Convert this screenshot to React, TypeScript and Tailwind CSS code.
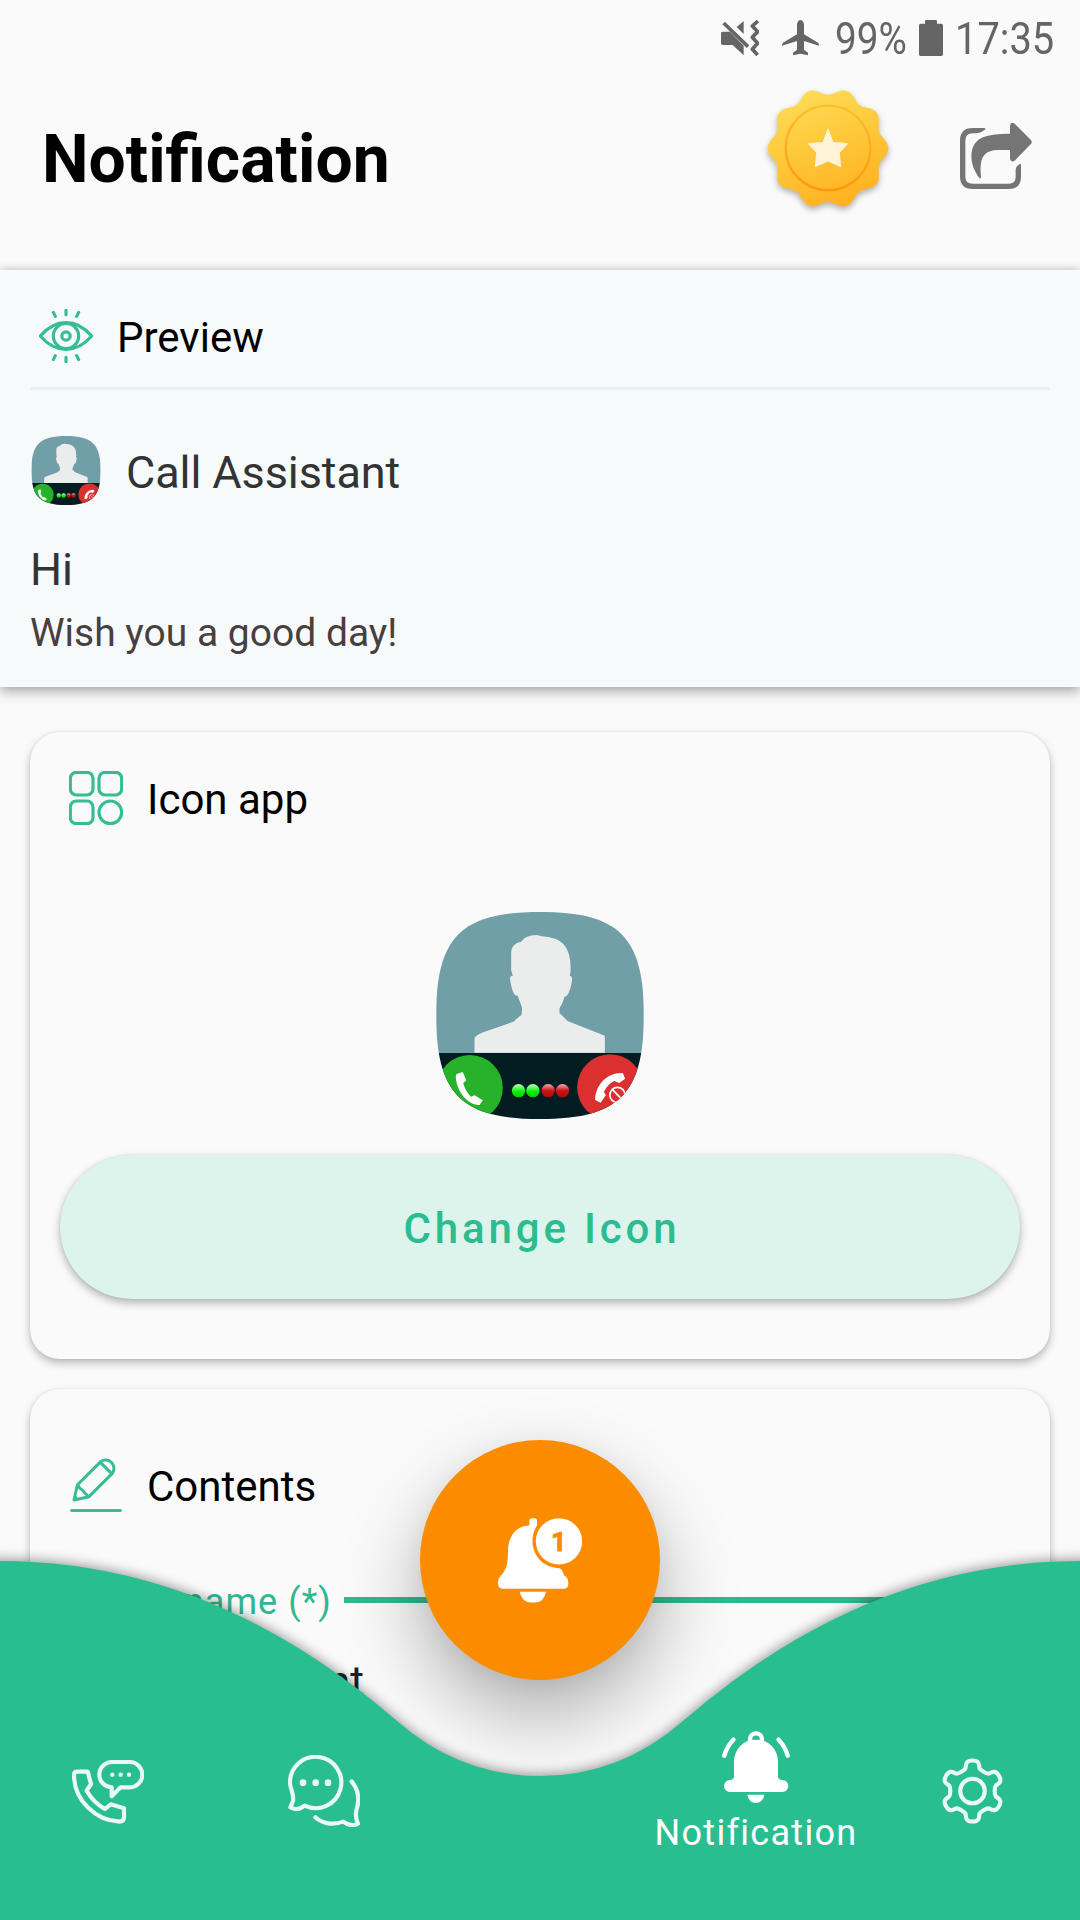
import { useId } from 'react';
import type { ReactNode } from 'react';

const GREEN = '#29be90';

function MuteIcon() {
  return (
    <svg viewBox="63 57 114 108" className="w-[38px] h-[36px]">
      <path d="M63 97q0-5 5-5h22l41 42v29l-33-31H68q-5 0-5-5zM131 60 110 78 131 99z" fill="#656565" />
      <path d="M71 66 144 137" stroke="#656565" strokeWidth="11" />
      <path d="M174 60 157 75 173 92 157 109 173 127 157 145 173 162" fill="none" stroke="#656565" strokeWidth="11" strokeLinejoin="round" />
    </svg>
  );
}

function PlaneIcon() {
  return (
    <svg viewBox="246 54 111 108" className="w-[37px] h-[36px]">
      <path
        d="M301 54q-10 2-10 16v27l-42 25q-3 2-3 9l45-14v26l-12 9v8l22-5 23 5v-8l-12-9v-26l45 14q0-7-3-9l-42-25V70q0-14-11-16z"
        fill="#656565"
      />
    </svg>
  );
}

function BatteryIcon() {
  return (
    <svg viewBox="657 57 72 108" className="w-[24px] h-[36px]">
      <rect x="675" y="57" width="36" height="20" rx="4" fill="#656565" />
      <rect x="657" y="68" width="72" height="97" rx="5" fill="#656565" />
    </svg>
  );
}

// ten-lobed scalloped edge
const badgePath = Array.from({ length: 180 }, (_, i) => {
  const a = (i * 2 * Math.PI) / 180;
  const r = 171 + 10 * Math.cos(10 * a);
  return `${i ? 'L' : 'M'}${(384 + r * Math.cos(a)).toFixed(1)} ${(445 + r * Math.sin(a)).toFixed(1)}`;
}).join('') + 'Z';

function BadgeIcon() {
  return (
    <svg viewBox="204 264 360 360" className="w-[120px] h-[120px] mt-3 overflow-visible drop-shadow-[0_3px_3px_rgba(0,0,0,0.3)]">
      <defs>
        <linearGradient id="gold" x1="0.3" y1="0" x2="0.7" y2="1">
          <stop offset="0" stopColor="#fddc55" />
          <stop offset="1" stopColor="#ffb01d" />
        </linearGradient>
        <linearGradient id="ring" x1="0" y1="0" x2="0" y2="1">
          <stop offset="0" stopColor="#fbc02d" />
          <stop offset="1" stopColor="#fb980c" />
        </linearGradient>
      </defs>
      <path d={badgePath} fill="url(#gold)" />
      <circle cx="384" cy="444" r="127" fill="none" stroke="url(#ring)" strokeWidth="7" />
      <path
        d="M384 387 399 427 443 431 418 458 422 500 384 483 346 500 350 458 325 431 369 427Z"
        fill="#fff3d6"
        stroke="#fff3d6"
        strokeWidth="3"
        strokeLinejoin="round"
      />
    </svg>
  );
}

function ShareIcon() {
  return (
    <svg viewBox="780 369 216 198" className="w-[72px] h-[66px] mt-[47px]">
      <path d="M854 384q5 4-2 7-10 9-26 9h-8q-22 0-22 22v108q0 21 22 21h108q21 0 21-21v-22q0-8 9-14 7-6 7 2v34q0 37-37 37H818q-38 0-38-38V422q0-38 38-38z" fill="#757575" />
      <path
        d="M838 534C822 512 806 478 819 442C832 410 862 402 930 401V377Q932 364 944 371L992 419Q999 426 992 433L944 482Q932 489 930 475V450H898C850 449 837 474 843 530Q842 537 838 534Z"
        fill="#757575"
      />
    </svg>
  );
}

function EyeIcon() {
  return (
    <svg viewBox="117 147 162 162" className="w-[54px] h-[54px]" fill="none" stroke="#37bd93" strokeWidth="9.5" strokeLinecap="round" strokeLinejoin="round">
      <path d="M121 228Q155 188 198 188T275 228Q241 268 198 268T121 228Z" />
      <circle cx="198" cy="228" r="38" />
      <circle cx="198" cy="228" r="12.5" />
      <path d="M198 151v13M160 157l6 12M236 157l-6 12M198 305v-13M160 299l6-12M236 299l-6-12" />
    </svg>
  );
}

function GridIcon() {
  return (
    <svg viewBox="207 153 162 162" className="w-[54px] h-[54px]" fill="none" stroke="#37bd93" strokeWidth="9.5">
      <rect x="211" y="157" width="68" height="68" rx="18" />
      <rect x="297" y="157" width="68" height="68" rx="18" />
      <rect x="211" y="243" width="68" height="68" rx="18" />
      <circle cx="331" cy="277" r="34" />
    </svg>
  );
}

function PencilIcon() {
  return (
    <svg viewBox="207 264 162 162" className="w-[54px] h-[54px]" fill="none" stroke="#37bd93" strokeWidth="9" strokeLinejoin="round" strokeLinecap="round">
      <path d="M232 345 302 275A25 25 0 0 1 337 310L267 380 222 390Z" />
      <path d="M301 277 335 311M234 347Q238 356 247 360 254 370 265 379" />
      <path d="M226 378 233 388" strokeWidth="5" />
      <path d="M215 421.5H361" />
    </svg>
  );
}

function CallAppIcon({ className }: { className: string }) {
  const id = useId();
  return (
    <svg viewBox="48 66 623 621" className={className}>
      <defs>
        <clipPath id={`${id}c`}>
          <path d="M48 376C48 140 124 66 360 66S671 140 671 376 596 687 360 687 48 612 48 376Z" />
        </clipPath>
        <linearGradient id={`${id}g`} x1="0" y1="0" x2="0" y2="1">
          <stop offset="0.05" stopColor="#b5f7b5" />
          <stop offset="0.55" stopColor="#08f408" />
          <stop offset="1" stopColor="#05c905" />
        </linearGradient>
        <linearGradient id={`${id}r`} x1="0" y1="0" x2="0" y2="1">
          <stop offset="0.05" stopColor="#eda0a0" />
          <stop offset="0.5" stopColor="#c81414" />
          <stop offset="1" stopColor="#a80e0e" />
        </linearGradient>
      </defs>
      <g clipPath={`url(#${id}c)`}>
        <path d="M40 60H680V490H40z" fill="#719fa7" />
        <path
          d="M163 488V443Q172 433 185 428L280 395Q290 385 303 376 307 365 305 350L297 330 293 318Q280 318 274 290 267 264 272 259L278 258 273 240V185Q275 160 303 155 315 136 350 135L364 139Q385 140 405 146 455 165 451 245L449 258Q458 257 455 275 448 318 433 320L427 338 418 355V370Q430 380 442 393L554 437V488Z"
          fill="#ebedec"
        />
        <path d="M40 489H680V700H40z" fill="#031c22" />
        <circle cx="149" cy="594" r="99" fill="#27b22b" />
        <circle cx="570" cy="592" r="99" fill="#da3030" />
        <path d="M107 558Q107 553 111 551L128 546 138 571 129 580Q136 604 152 620L163 616 188 631 178 645C140 646 106 598 107 558Z" fill="#fff" />
        <path d="M525 630C525 585 562 546 608 549L615 566 597 579 583 573Q562 582 551 606L557 616 541 638Z" fill="#fff" />
        <g fill="#da3030" stroke="#fff" strokeWidth="5">
          <circle cx="592" cy="615" r="23" />
          <path d="M577 599 608 631" />
        </g>
        <circle cx="295" cy="602" r="20" fill={`url(#${id}g)`} />
        <circle cx="338" cy="602" r="20" fill={`url(#${id}g)`} />
        <circle cx="384" cy="602" r="20" fill={`url(#${id}r)`} />
        <circle cx="427" cy="602" r="20" fill={`url(#${id}r)`} />
      </g>
    </svg>
  );
}

function BellBadgeIcon() {
  return (
    <svg viewBox="294 293 252 254" className="w-[84px] h-[85px]">
      <path
        d="M324 400C322 352 345 316 388 315V301Q388 293 396 293H404Q411 293 411 301V314C380 362 402 440 478 443Q487 446 493 466Q505 470 505 488Q505 505 490 505H310Q294 505 294 490Q293 475 300 469C320 448 323 430 324 400Z"
        fill="#fff"
      />
      <path d="M359 514H438Q432 546 405 546H393Q366 546 359 514Z" fill="#fff" />
      <circle cx="477" cy="362.5" r="69.5" fill="#fff" />
      <text x="476" y="391" textAnchor="middle" fontSize="78" fill="#fb8c00" stroke="#fb8c00" strokeWidth="3" strokeLinejoin="round" className="font-['Roboto',sans-serif] font-bold">1</text>
    </svg>
  );
}

function PhoneChatIcon() {
  return (
    <svg viewBox="216 175 216 195" className="w-[72px] h-[65px]" fill="none" stroke="#e9f8f3" strokeWidth="12.5" strokeLinejoin="round">
      <path d="M222 223Q222 213 232 213H263L273 250 260 270Q280 305 315 325L332 311 372 323V350Q372 363 358 363C288 360 222 300 222 223Z" />
      <path d="M362 260H389A38 38 0 0 0 389 184H337A38 38 0 0 0 335 260V287Z" />
      <g fill="#e9f8f3" stroke="none">
        <circle cx="337" cy="222" r="6.5" />
        <circle cx="362" cy="222" r="6.5" />
        <circle cx="387" cy="222" r="6.5" />
      </g>
    </svg>
  );
}

function ChatsIcon() {
  return (
    <svg viewBox="864 165 216 216" className="w-[72px] h-[72px]" fill="none" stroke="#e9f8f3" strokeWidth="12.5" strokeLinejoin="round" strokeLinecap="round">
      <path d="M914 317A77 77 0 1 0 870 250C872 270 883 285 879 303L871 322C884 330 900 328 914 317Z" />
      <path d="M1055 244C1074 268 1079 296 1071 323 1064 345 1068 358 1074 371 1060 378 1044 376 1030 365 1000 376 968 372 946 352" />
      <g fill="#e9f8f3" stroke="none">
        <circle cx="909" cy="248" r="10" />
        <circle cx="947" cy="248" r="10" />
        <circle cx="984" cy="248" r="10" />
      </g>
    </svg>
  );
}

function BellIcon() {
  return (
    <svg viewBox="246 633 204 216" className="w-[68px] h-[72px]">
      <g fill="#fff">
        <path d="M282 770V724A66 66 0 0 1 414 724V770Q415 779 427 780A18 18 0 0 1 427 816H270A18 18 0 0 1 270 780Q281 779 282 770Z" />
        <path d="M322 824H373Q368 849 348 849 327 849 322 824Z" />
      </g>
      <g fill="none" stroke="#fff" strokeWidth="13" strokeLinecap="round">
        <path d="M330 668V658A18 18 0 0 1 366 658V668" />
        <path d="M280 659Q260 680 253 707M416 659Q436 680 443 707" />
      </g>
      <path d="M338 659Q340 648 348 648T358 659Z" fill={GREEN} />
    </svg>
  );
}

function GearIcon() {
  const tooth = [[-33.5, -58], [-23, -64], [-21, -69], [-19, -80], [-22, -92], [0, -92], [22, -92], [19, -80], [21, -69], [23, -64], [33.5, -58]];
  const d = [0, 60, 120, 180, 240, 300]
    .map((deg) => {
      const a = (deg * Math.PI) / 180;
      const p = tooth.map(([x, y]) => `${(996 + x * Math.cos(a) - y * Math.sin(a)).toFixed(1)} ${(813 + x * Math.sin(a) + y * Math.cos(a)).toFixed(1)}`);
      return `${deg ? 'L' : 'M'}${p[0]}Q${p[1]} ${p[2]}C${p[3]} ${p[4]} ${p[5]}C${p[6]} ${p[7]} ${p[8]}Q${p[9]} ${p[10]}`;
    })
    .join('');
  return (
    <svg viewBox="904 714 184 198" className="w-[61px] h-[66px] overflow-visible" fill="none" stroke="#e9f8f3" strokeWidth="12.5" strokeLinejoin="round">
      <path d={`${d}Z`} />
      <circle cx="996" cy="813" r="37" />
    </svg>
  );
}

function SectionTitle({ icon, children }: { icon: ReactNode; children: ReactNode }) {
  return (
    <div className="flex items-center gap-[24px] h-[54px] text-[42px] leading-[54px] text-black">
      {icon}
      <span className="pt-[3px]">{children}</span>
    </div>
  );
}

export default function App() {
  return (
    <div className="relative w-[1080px] h-[1920px] overflow-hidden bg-[#fafafa] font-['Roboto',sans-serif]">
      {/* Status bar */}
      <div className="flex items-center h-[76px] pl-[721px] text-[45px] leading-[74px] text-[#656565]">
        <MuteIcon />
        <div className="ml-[23px]"><PlaneIcon /></div>
        <div className="ml-[16px] w-[84px] pt-[2px]">
          <span className="inline-block origin-left scale-x-[0.86]">99%</span>
        </div>
        <BatteryIcon />
        <div className="ml-[12px] w-[100px] pt-[2px]">
          <span className="inline-block origin-left scale-x-[0.885]">17:35</span>
        </div>
      </div>

      {/* Header */}
      <header className="flex h-[194px] pl-[42px] pr-[48px]">
        <h1 className="mt-[44px] mr-auto text-[66px] leading-[80px] font-bold text-black">Notification</h1>
        <BadgeIcon />
        <div className="w-[72px]" />
        <ShareIcon />
      </header>

      {/* Preview */}
      <section className="relative h-[417px] px-[30px] bg-[#f6fafb] shadow-[0_6px_12px_rgba(0,0,0,0.22),0_0_10px_rgba(0,0,0,0.2)]">
        <div className="h-[120px] pt-[39px] pl-[9px] border-b-[3px] border-[#e5f0ef]">
          <SectionTitle icon={<EyeIcon />}>Preview</SectionTitle>
        </div>
        <div className="flex items-start pl-px mt-[46px] h-[72px] text-[45px] leading-[72px] tracking-[-0.1px] text-[#333]">
          <CallAppIcon className="w-[70px] h-[69px] mr-[25px]" />
          <span className="pt-px">Call Assistant</span>
        </div>
        <p className="mt-[32px] text-[45px] leading-[60px] text-[#333]">Hi</p>
        <p className="mt-[8px] text-[39px] leading-[50px] text-[#483f3f]">Wish you a good day!</p>
      </section>

      <main className="flex flex-col gap-[30px] px-[30px] pt-[45px]">
        {/* Icon app */}
        <section className="flex flex-col h-[627px] px-[30px] pt-[39px] rounded-[30px] bg-[#fafafa] shadow-[0_4px_8px_rgba(0,0,0,0.27),0_0_2px_rgba(0,0,0,0.1)]">
          <div className="pl-[9px]">
            <SectionTitle icon={<GridIcon />}>Icon app</SectionTitle>
          </div>
          <CallAppIcon className="w-[208px] h-[207px] mt-[87px] self-center" />
          <button className="h-[144px] mt-[36px] pt-[4px] pl-[4px] rounded-full bg-[#ddf4ed] text-[42px] leading-[60px] font-medium tracking-[3.85px] text-[#2bbc90] shadow-[0_4px_8px_rgba(0,0,0,0.29),0_0_2px_rgba(0,0,0,0.1)]">
            Change Icon
          </button>
        </section>

        {/* Contents */}
        <section className="h-[600px] px-[30px] pt-[69px] rounded-[30px] bg-[#fafafa] shadow-[0_4px_8px_rgba(0,0,0,0.27),0_0_2px_rgba(0,0,0,0.1)]">
          <div className="pl-[9px]">
            <SectionTitle icon={<PencilIcon />}>Contents</SectionTitle>
          </div>
          <div className="flex items-center mt-[64px] h-[48px] text-[36px] leading-[48px] tracking-[1.1px] text-[#2fb890]">
            <span className="w-[272px] pt-[3px] text-right whitespace-nowrap">App name (*)</span>
            <span className="ml-[12px] grow h-[6px] bg-[#2fb890]" />
          </div>
          <p className="mt-[28px] w-[304px] text-right text-[42px] leading-[60px] text-[#222]">Call Assistant</p>
        </section>
      </main>

      {/* Floating button */}
      <button className="absolute left-[420px] top-[1440px] flex items-center justify-center w-[240px] h-[240px] rounded-full bg-[#fb8c00] shadow-[0_36px_80px_rgba(0,0,0,0.3),0_4px_24px_rgba(0,0,0,0.05)]">
        <BellBadgeIcon />
      </button>

      {/* Bottom navigation */}
      <nav className="absolute inset-x-0 bottom-0 h-[360px]">
        <svg viewBox="0 0 1080 360" className="absolute inset-0 w-[1080px] h-[360px] overflow-visible drop-shadow-[0_-2px_6px_rgba(0,0,0,0.38)]">
          <path d="M-30 1H0Q213 1 397 161 460 216 540 216T683 161Q867 1 1080 1H1110V390H-30Z" fill={GREEN} />
        </svg>
        <div className="relative grid grid-cols-5 justify-items-center h-full text-white">
          <div className="pt-[199px]"><PhoneChatIcon /></div>
          <div className="pt-[195px]"><ChatsIcon /></div>
          <div />
          <div className="flex flex-col items-center pt-[171px]">
            <BellIcon />
            <span className="mt-[6px] text-[36px] leading-[48px] tracking-[1.3px]">Notification</span>
          </div>
          <div className="pt-[198px]"><GearIcon /></div>
        </div>
      </nav>
    </div>
  );
}
